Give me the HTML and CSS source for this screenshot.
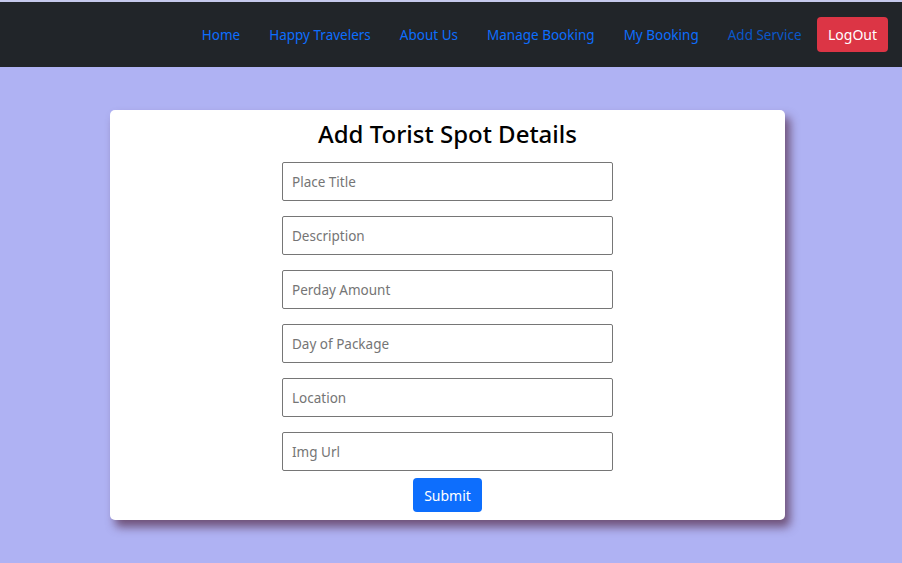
FILE: index.html
```html
<!DOCTYPE html>
<html>
<head>
<meta charset="utf-8">
<link rel="stylesheet" href="styles.css">
</head>
<body>
<div class="topline"></div>
<nav class="navbar">
  <a class="nav-link" href="#">Home</a>
  <a class="nav-link" href="#">Happy Travelers</a>
  <a class="nav-link" href="#">About Us</a>
  <a class="nav-link" href="#">Manage Booking</a>
  <a class="nav-link" href="#">My Booking</a>
  <a class="nav-link active" href="#">Add Service</a>
  <button class="btn-logout">LogOut</button>
</nav>
<main class="main">
  <form class="card">
    <h2 class="title">Add Torist Spot Details</h2>
    <input class="field" placeholder="Place Title">
    <input class="field" placeholder="Description">
    <input class="field" placeholder="Perday Amount">
    <input class="field" placeholder="Day of Package">
    <input class="field" placeholder="Location">
    <input class="field" placeholder="Img Url">
    <button class="btn-submit" type="button">Submit</button>
  </form>
</main>
</body>
</html>
```
FILE: styles.css
```css
* { box-sizing: border-box; }
html, body { margin: 0; padding: 0; }
body {
  font-family: "Noto Sans", "Open Sans", sans-serif;
  background: #afb2f3;
  height: 563px;
  overflow: hidden;
}
.topline { height: 2px; background: #c5c9ec; }
.navbar {
  height: 65px;
  background: #212529;
  display: flex;
  align-items: center;
  justify-content: flex-end;
  padding-right: 14px;
}
.nav-link {
  color: #0d6efd;
  text-decoration: none;
  font-size: 13.5px;
  padding: 0 14.5px;
  line-height: 20px;
}
.nav-link.active { color: #0a58ca; }
.btn-logout {
  margin-left: 1px;
  background: #dc3545;
  color: #fff;
  border: none;
  border-radius: 4px;
  font-family: inherit;
  font-size: 14px;
  width: 71px;
  height: 35px;
  padding: 0;
}
.main { padding-top: 43px; display: flex; justify-content: center; }
.card {
  width: 675px;
  margin-right: 7px;
  background: #fff;
  border-radius: 5px;
  box-shadow: 5px 7px 10px rgba(90, 50, 80, 0.75);
  display: flex;
  flex-direction: column;
  align-items: center;
  padding: 7px 0 8px;
}
.title {
  margin: 0 0 12px;
  font-size: 24px;
  font-weight: 500;
  line-height: 33px;
  color: #000;
}
.field {
  width: 331px;
  height: 39px;
  margin-bottom: 15px;
  border: 1px solid #767676;
  border-radius: 2px;
  padding: 0 9px;
  font-family: inherit;
  font-size: 13.5px;
  color: #333;
}
.field:last-of-type { margin-bottom: 7px; }
.field::placeholder { color: #757575; }
.btn-submit {
  background: #0d6efd;
  color: #fff;
  border: none;
  border-radius: 4px;
  width: 69px;
  height: 34px;
  font-family: inherit;
  font-size: 14px;
  padding: 0;
}
```
